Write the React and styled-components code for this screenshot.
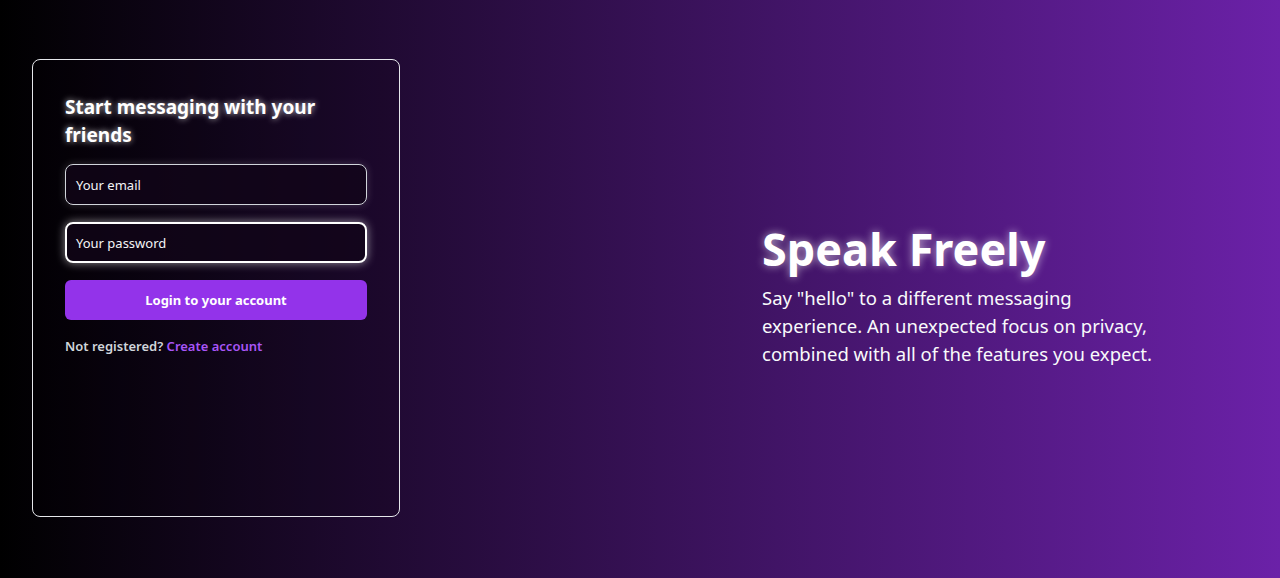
import React from 'react';
import styled, { createGlobalStyle } from 'styled-components';

const GlobalStyle = createGlobalStyle`
  * { box-sizing: border-box; }
  html, body { margin: 0; padding: 0; }
  body {
    font-family: "Noto Sans", "Open Sans", sans-serif;
    color: #fff;
  }
`;

const Page = styled.div`
  width: 100%;
  height: 578px;
  display: grid;
  grid-template-columns: 1fr 1fr;
  background: linear-gradient(to right, #000 0%, #6b21a8 100%);
  overflow: hidden;
`;

const LeftSide = styled.div`
  padding: 59px 240px 61px 32px;
  display: flex;
`;

const Card = styled.form`
  flex: 1;
  border: 1px solid #e5e7eb;
  border-radius: 8px;
  background: rgba(0, 0, 0, 0.12);
  padding: 32px;
  display: flex;
  flex-direction: column;
`;

const Title = styled.h2`
  margin: 1px 0 15px;
  font-size: 19px;
  line-height: 28px;
  font-weight: 700;
  text-shadow: 0 0 6px rgba(255, 255, 255, 0.75);
`;

const Field = styled.div`
  height: 41px;
  border-radius: 8px;
  border: ${p => (p.focused ? '2px solid #fff' : '1px solid #d1d5db')};
  background: rgba(17, 6, 24, 0.75);
  box-shadow: ${p => (p.focused ? '0 0 10px rgba(255,255,255,0.55)' : '0 0 8px rgba(255,255,255,0.18)')};
  display: flex;
  align-items: center;
  padding: 0 ${p => (p.focused ? '9px' : '10px')};
  font-size: 13px;
  color: #f3f4f6;
  margin-bottom: 17px;
`;

const Button = styled.div`
  height: 40px;
  border-radius: 6px;
  background: #9333ea;
  display: flex;
  align-items: center;
  justify-content: center;
  font-size: 13px;
  font-weight: 700;
  color: #fff;
`;

const Footer = styled.p`
  margin: 17px 0 0;
  font-size: 13px;
  font-weight: 600;
  color: #d1d5db;
`;

const Link = styled.a`
  color: #a855f7;
  text-decoration: none;
`;

const RightSide = styled.div`
  display: flex;
  align-items: center;
  justify-content: center;
  padding-top: 12px;
`;

const Hero = styled.div`
  width: 400px;
  margin-left: 4px;
`;

const HeroTitle = styled.h1`
  margin: 0 0 8px;
  font-size: 45px;
  line-height: 54px;
  font-weight: 700;
  text-shadow: 0 0 8px rgba(255, 255, 255, 0.6);
`;

const HeroText = styled.p`
  margin: 0;
  font-size: 18.5px;
  line-height: 28px;
  color: #f9fafb;
`;

export default function App() {
  return (
    <>
      <GlobalStyle />
      <Page>
        <LeftSide>
          <Card>
            <Title>Start messaging with your friends</Title>
            <Field>Your email</Field>
            <Field focused>Your password</Field>
            <Button>Login to your account</Button>
            <Footer>
              Not registered? <Link>Create account</Link>
            </Footer>
          </Card>
        </LeftSide>
        <RightSide>
          <Hero>
            <HeroTitle>Speak Freely</HeroTitle>
            <HeroText>
              Say "hello" to a different messaging experience. An unexpected focus on privacy, combined with all of the features you expect.
            </HeroText>
          </Hero>
        </RightSide>
      </Page>
    </>
  );
}
